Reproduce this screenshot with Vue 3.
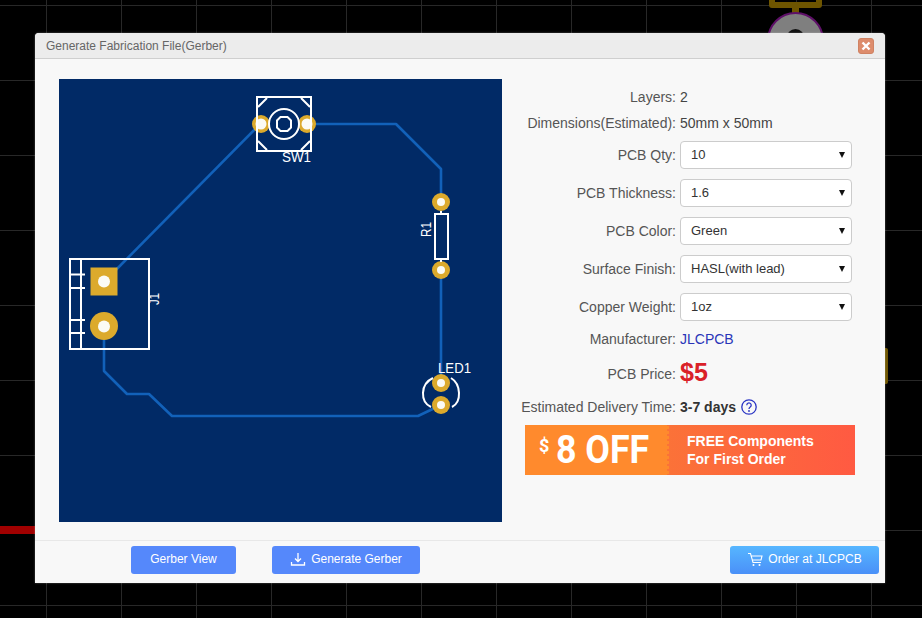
<script setup>
const selects = [
  { label: 'PCB Qty:', options: ['10', '5', '15', '20'] },
  { label: 'PCB Thickness:', options: ['1.6', '0.8', '1.0', '1.2'] },
  { label: 'PCB Color:', options: ['Green', 'Red', 'Blue', 'Black'] },
  { label: 'Surface Finish:', options: ['HASL(with lead)', 'HASL(lead free)'] },
  { label: 'Copper Weight:', options: ['1oz', '2oz'] },
]
</script>

<template>
  <div class="stage">
    <!-- canvas parts behind the dialog -->
    <div class="bg-red"></div>
    <div class="bg-gold"></div>
    <svg class="bg-part" width="80" height="50" viewBox="0 0 80 50">
      <path d="M16 -4V5H63V-4" fill="none" stroke="#6e5500" stroke-width="6" stroke-linejoin="round" />
      <rect x="36" y="8" width="7" height="5" fill="#6e5500" />
      <circle cx="39.500" cy="40.500" r="27.500" fill="#7f7f7f" stroke="#5e1068" stroke-width="2" />
      <circle cx="39.500" cy="38" r="9" fill="#111" />
    </svg>

    <section class="dialog">
      <header class="head">
        <span class="title">Generate Fabrication File(Gerber)</span>
        <button class="close" aria-label="Close">
          <svg width="10" height="10" viewBox="0 0 10 10">
            <path d="M1.5 1.5L8.5 8.5M8.5 1.5L1.5 8.5" stroke="#fff" stroke-width="2.4" />
          </svg>
        </button>
      </header>

      <div class="body">
        <svg class="pcb" width="443" height="443" viewBox="59 79 443 443">
          <rect x="59" y="79" width="443" height="443" fill="#012a66" />
          <g fill="none" stroke="#1261b9" stroke-width="2.6" stroke-linejoin="round">
            <path d="M307 124H396L441 169V202" />
            <path d="M104 282L260 124" />
            <path d="M441 270V382" />
            <path d="M104 326V371L127 394H149L172 416H418L441 405" />
          </g>
          <g fill="#dcaa2c">
            <circle cx="261" cy="124" r="9" />
            <circle cx="307" cy="124" r="9" />
            <circle cx="441" cy="202" r="9" />
            <circle cx="441" cy="270" r="9" />
            <circle cx="441" cy="383" r="9" />
            <circle cx="441" cy="405" r="9" />
            <rect x="90.500" y="267.500" width="27" height="28" />
            <circle cx="104" cy="326" r="14" />
          </g>
          <g fill="#fbfbf5">
            <circle cx="261" cy="124" r="5.500" />
            <circle cx="307" cy="124" r="5.500" />
            <circle cx="441" cy="202" r="4" />
            <circle cx="441" cy="270" r="4" />
            <circle cx="441" cy="383" r="4" />
            <circle cx="441" cy="405" r="4" />
            <circle cx="104" cy="281.500" r="6" />
            <circle cx="104" cy="326.500" r="6" />
          </g>
          <g fill="none" stroke="#fff" stroke-width="2">
            <rect x="257" y="97" width="54" height="54" />
            <path d="M258 107L267 98M301 98L310 107M258 141L267 150M301 150L310 141" />
            <circle cx="284" cy="124" r="15" />
            <path d="M280.500 117H287.500L291 120.500V127.500L287.500 131H280.500L277 127.500V120.500Z" />
            <rect x="70" y="259" width="79" height="90" />
            <path d="M81 259V349M70 274.500H85M70 288H85M70 320H85M70 333H85" />
            <rect x="435" y="214" width="13" height="45" />
            <path d="M441 211V214M441 259V262" />
            <path d="M433 378C420 384 420 402 431 407M451 378C461 384 462 402 452 407" />
          </g>
          <g fill="#fff" font-family="'Liberation Sans', Arial, sans-serif" font-size="14">
            <text x="282" y="162" textLength="29" lengthAdjust="spacingAndGlyphs">SW1</text>
            <text x="438" y="373" textLength="33" lengthAdjust="spacingAndGlyphs">LED1</text>
            <text transform="translate(431 237) rotate(-90)" textLength="15" lengthAdjust="spacingAndGlyphs">R1</text>
            <text transform="translate(159 305) rotate(-90)" textLength="12" lengthAdjust="spacingAndGlyphs">J1</text>
          </g>
        </svg>

        <div class="form">
          <div class="row short first">
            <span class="label">Layers:</span><span class="value">2</span>
          </div>
          <div class="row short dims">
            <span class="label">Dimensions(Estimated):</span><span class="value">50mm x 50mm</span>
          </div>
          <div v-for="item in selects" :key="item.label" class="row pick">
            <span class="label">{{ item.label }}</span>
            <span class="select">
              <select>
                <option v-for="o in item.options" :key="o">{{ o }}</option>
              </select>
            </span>
          </div>
          <div class="row short maker">
            <span class="label">Manufacturer:</span><span class="value link">JLCPCB</span>
          </div>
          <div class="row price">
            <span class="label">PCB Price:</span><span class="amount">$5</span>
          </div>
          <div class="row short time">
            <span class="label">Estimated Delivery Time:</span>
            <span class="value days">3-7 days</span>
            <svg class="help" width="18" height="18" viewBox="0 0 18 18">
              <circle cx="9" cy="9" r="7.200" fill="none" stroke="#2a35c4" stroke-width="1.300" />
              <path d="M6.800 7.200A2.200 2.200 0 1 1 10.200 9C9.300 9.600 9 10 9 11" fill="none" stroke="#2a35c4" stroke-width="1.300" />
              <circle cx="9" cy="13" r="0.900" fill="#2a35c4" />
            </svg>
          </div>
          <div class="promo">
            <div class="promo-left">
              <span class="dollar">$</span>
              <span class="off">8 OFF</span>
            </div>
            <div class="promo-right">FREE Components<br />For First Order</div>
          </div>
        </div>
      </div>

      <footer class="foot">
        <button class="btn first-btn">Gerber View</button>
        <button class="btn gen">
          <svg width="16" height="16" viewBox="0 0 16 16" fill="none" stroke="#fff" stroke-width="1.300">
            <path d="M8 2V10M5 7.500L8 10.500L11 7.500M1.500 11V14H14.500V11" />
          </svg>
          Generate Gerber
        </button>
        <button class="btn order">
          <svg width="16" height="16" viewBox="0 0 16 16" fill="none" stroke="#fff" stroke-width="1.100">
            <path d="M1 2.500H3.500L6 11.500H14M4.500 5H15L14 9H5.500" />
            <circle cx="6.500" cy="14" r="1" fill="#fff" stroke="none" />
            <circle cx="12.500" cy="14" r="1" fill="#fff" stroke="none" />
          </svg>
          Order at JLCPCB
        </button>
      </footer>
    </section>
  </div>
</template>

<style>
html, body { margin: 0; background: #000; }
</style>

<style scoped>
.stage {
  position: relative;
  width: 922px;
  height: 618px;
  overflow: hidden;
  padding: 33px 37px 0 35px;
  box-sizing: border-box;
  background-color: #000;
  background-image:
    linear-gradient(to right, #282828 1.5px, transparent 1.5px),
    linear-gradient(to bottom, #282828 1.5px, transparent 1.5px);
  background-size: 75px 75px;
  background-position: 46px 5px;
  font-family: "Liberation Sans", Arial, sans-serif;
}
.bg-red { position: absolute; left: 0; top: 526px; width: 40px; height: 8px; background: #a00000; }
.bg-gold { position: absolute; left: 880px; top: 348px; width: 8px; height: 36px; background: #6e5500; border-radius: 2px; }
.bg-part { position: absolute; left: 756px; top: 0; }

.dialog {
  position: relative;
  width: 850px;
  height: 550px;
  display: flex;
  flex-direction: column;
  background: #f8f8f8;
  border-radius: 4px 4px 0 0;
  box-shadow: 0 0 2px rgba(255, 255, 255, .4);
}
.head {
  height: 25px;
  flex: none;
  display: flex;
  align-items: center;
  justify-content: space-between;
  padding: 0 11px;
  background: #ececec;
  border-bottom: 1px solid #cfcfcf;
  border-radius: 4px 4px 0 0;
}
.title { font-size: 12px; color: #666; }
.close {
  width: 16px;
  height: 16px;
  padding: 0;
  border: 1px solid #cf8263;
  border-radius: 3px;
  background: #dd8c6c;
  display: flex;
  align-items: center;
  justify-content: center;
}
.body {
  flex: 1;
  display: flex;
  padding: 20px 0 0 24px;
}
.pcb { display: block; flex: none; }
.form {
  margin-left: 19px;
  font-size: 14px;
  color: #444;
}
.row { display: flex; align-items: center; }
.label { width: 159px; padding-right: 4px; flex: none; box-sizing: border-box; text-align: right; color: #555; white-space: nowrap; }
.short { height: 18px; }
.first { margin-top: 9px; }
.dims { margin-top: 8px; }
.pick { height: 28px; margin-top: 10px; }
.dims + .pick { margin-top: 9px; }
.maker { margin-top: 9px; }
.price { height: 26px; margin-top: 13px; }
.time { margin-top: 11px; }
.value { color: #444; }
.link { color: #2a35b8; }
.amount { color: #da2128; font-size: 25px; font-weight: 700; line-height: 26px; position: relative; top: -2px; }
.days { font-weight: 700; color: #333; }
.help { margin-left: 4px; }

.select { position: relative; display: block; width: 172px; height: 28px; }
.select::after {
  content: "";
  position: absolute;
  right: 7px;
  top: 11px;
  border-left: 3px solid transparent;
  border-right: 3px solid transparent;
  border-top: 6px solid #111;
  pointer-events: none;
}
.select select {
  appearance: none;
  width: 100%;
  height: 100%;
  box-sizing: border-box;
  padding: 0 0 2px 10px;
  background: #fff;
  border: 1px solid #ccc;
  border-radius: 4px;
  font: 13px "Liberation Sans", Arial, sans-serif;
  color: #333;
  outline: none;
}

.promo {
  margin: 9px 0 0 4px;
  width: 330px;
  height: 50px;
  display: flex;
  color: #fff;
  overflow: hidden;
}
.promo-left {
  position: relative;
  width: 142px;
  flex: none;
  background: #ff8a2d;
  display: flex;
  align-items: center;
  padding-left: 14px;
  box-sizing: border-box;
}
.promo-left::after {
  content: "";
  position: absolute;
  right: -2px;
  top: 0;
  width: 4px;
  height: 100%;
  background: radial-gradient(circle at 2px 2.500px, #ff8a2d 1.800px, transparent 2.100px) 0 0 / 4px 5px repeat-y;
}
.dollar { font: 700 18px/18px Roboto, "Liberation Sans", sans-serif; align-self: flex-start; margin-top: 12px; }
.off {
  display: inline-block;
  font: 700 38px/50px Roboto, "Liberation Sans", sans-serif;
  margin-left: 7px;
  white-space: nowrap;
  transform: scaleX(.94);
  transform-origin: left center;
}
.promo-right {
  flex: 1;
  padding: 7px 0 0 20px;
  font-size: 14px;
  font-weight: 700;
  line-height: 18px;
  background: linear-gradient(to right, #fb7238, #ff5a42);
}

.foot {
  height: 43px;
  flex: none;
  box-sizing: border-box;
  display: flex;
  align-items: flex-start;
  padding: 5px 6px 0 96px;
  border-top: 1px solid #e8e8e8;
}
.btn {
  height: 28px;
  padding: 0 0 3px;
  border: 0;
  border-radius: 3px;
  background: #5588fb;
  color: #fff;
  font: 12px "Liberation Sans", Arial, sans-serif;
  display: flex;
  align-items: center;
  justify-content: center;
  gap: 5px;
}
.first-btn { width: 105px; }
.gen { width: 148px; margin-left: 36px; }
.order {
  width: 149px;
  margin-left: auto;
  background: linear-gradient(to bottom, #56b6ff, #4a90f8);
}
</style>
